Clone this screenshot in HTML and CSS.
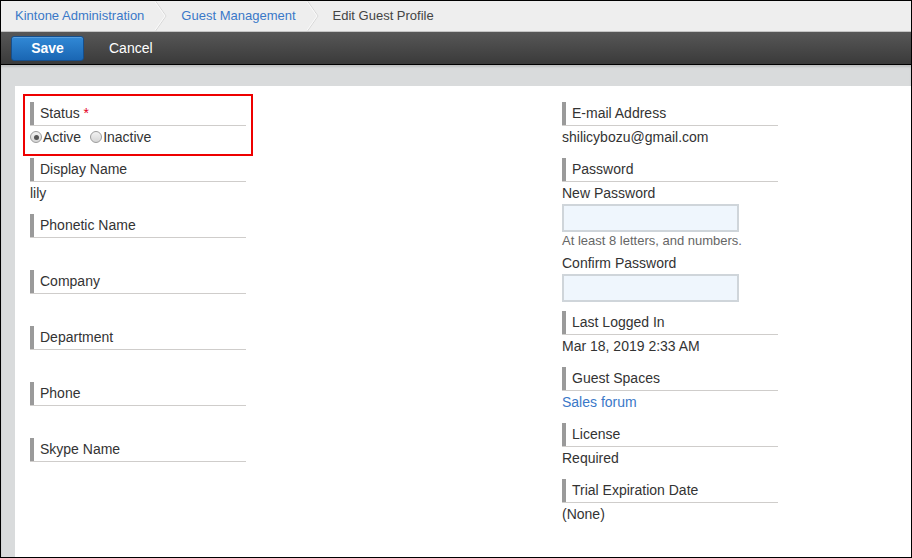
FILE: index.html
```html
<!DOCTYPE html>
<html>
<head>
<meta charset="utf-8">
<title>Edit Guest Profile</title>
<link rel="stylesheet" href="styles.css">
</head>
<body>
<div class="frame">
  <nav class="crumbs">
    <a class="crumb link">Kintone Administration</a>
    <svg class="chev" width="12" height="30" viewBox="0 0 12 30"><polyline points="0.5,0 11,15 0.5,30" fill="none" stroke="#d6d6d6" stroke-width="1"/><polyline points="-0.5,0 10,15 -0.5,30" fill="none" stroke="#fafafa" stroke-width="1"/></svg>
    <a class="crumb link">Guest Management</a>
    <svg class="chev" width="12" height="30" viewBox="0 0 12 30"><polyline points="0.5,0 11,15 0.5,30" fill="none" stroke="#d6d6d6" stroke-width="1"/><polyline points="-0.5,0 10,15 -0.5,30" fill="none" stroke="#fafafa" stroke-width="1"/></svg>
    <span class="crumb current">Edit Guest Profile</span>
  </nav>
  <div class="toolbar">
    <button class="btn-save">Save</button>
    <button class="btn-cancel">Cancel</button>
  </div>
  <div class="backdrop">
    <div class="panel">
      <div class="col col-left">
        <div class="field field-status">
          <div class="label"><span>Status <em class="req">*</em></span></div>
          <div class="value radios">
            <span class="radio"><i class="dot checked"></i>Active</span>
            <span class="radio"><i class="dot"></i>Inactive</span>
          </div>
        </div>
        <div class="field">
          <div class="label"><span>Display Name</span></div>
          <div class="value">lily</div>
        </div>
        <div class="field">
          <div class="label"><span>Phonetic Name</span></div>
          <div class="value"></div>
        </div>
        <div class="field">
          <div class="label"><span>Company</span></div>
          <div class="value"></div>
        </div>
        <div class="field">
          <div class="label"><span>Department</span></div>
          <div class="value"></div>
        </div>
        <div class="field">
          <div class="label"><span>Phone</span></div>
          <div class="value"></div>
        </div>
        <div class="field">
          <div class="label"><span>Skype Name</span></div>
          <div class="value"></div>
        </div>
      </div>
      <div class="col col-right">
        <div class="field">
          <div class="label"><span>E-mail Address</span></div>
          <div class="value">shilicybozu@gmail.com</div>
        </div>
        <div class="field field-password">
          <div class="label"><span>Password</span></div>
          <div class="value">New Password</div>
          <input class="pw" type="password">
          <div class="hint">At least 8 letters, and numbers.</div>
          <div class="value sub">Confirm Password</div>
          <input class="pw" type="password">
        </div>
        <div class="field">
          <div class="label"><span>Last Logged In</span></div>
          <div class="value">Mar 18, 2019 2:33 AM</div>
        </div>
        <div class="field">
          <div class="label"><span>Guest Spaces</span></div>
          <div class="value"><a class="link">Sales forum</a></div>
        </div>
        <div class="field">
          <div class="label"><span>License</span></div>
          <div class="value">Required</div>
        </div>
        <div class="field">
          <div class="label"><span>Trial Expiration Date</span></div>
          <div class="value">(None)</div>
        </div>
      </div>
    </div>
  </div>
</div>
</body>
</html>
```

FILE: styles.css
```css
*, *::before, *::after { box-sizing: border-box; }
html, body { margin: 0; padding: 0; background: #fff; }
body {
  font-family: "Liberation Sans", Arial, sans-serif;
  font-size: 14px;
  color: #333;
}
.frame {
  width: 912px;
  height: 558px;
  border: 1px solid #000;
  overflow: hidden;
  display: flex;
  flex-direction: column;
}
.crumbs {
  height: 31px;
  flex: none;
  background: #eeeeee;
  border-bottom: 1px solid #c4c4c4;
  display: flex;
  align-items: center;
  padding-left: 14px;
  font-size: 13px;
}
.crumb { line-height: 30px; white-space: nowrap; }
.link { color: #3a78c8; text-decoration: none; cursor: pointer; }
.current { color: #444; }
.chev { display: block; flex: none; margin: 0 14px 0 11px; }
.toolbar {
  height: 33px;
  flex: none;
  background: linear-gradient(#575757, #3a3a3a);
  border-bottom: 1px solid #000;
  display: flex;
  align-items: center;
  padding-left: 10px;
}
.btn-save {
  width: 73px;
  height: 25px;
  border: 1px solid #164f8c;
  border-radius: 3px;
  background: linear-gradient(#3189d6, #1a66b3);
  color: #fff;
  font-family: "Liberation Sans", Arial, sans-serif;
  font-weight: bold;
  font-size: 14px;
  padding: 0;
  box-shadow: inset 0 1px 0 rgba(255,255,255,0.2);
}
.btn-cancel {
  background: none;
  border: 0;
  color: #fff;
  font-family: "Liberation Sans", Arial, sans-serif;
  font-size: 14px;
  padding: 0;
  margin-left: 25px;
}
.backdrop {
  flex: 1;
  background: #d9dbdc;
  padding: 21px 0 0 14px;
  display: flex;
  box-shadow: inset 0 2px 2px rgba(0,0,0,0.12);
}
.panel {
  flex: 1;
  background: #fff;
  padding: 16px 0 0 15px;
  display: flex;
}
.col-left { width: 532px; flex: none; }
.col-right { flex: 1; }
.field { width: 216px; margin-bottom: 11px; }
.label {
  border-bottom: 1px solid #cfcdcb;
  height: 24px;
}
.label span {
  display: block;
  border-left: 4px solid #9a9a9a;
  padding-left: 6px;
  line-height: 23px;
  height: 23px;
  white-space: nowrap;
}
.req { color: #e3001b; font-style: normal; }
.value {
  margin-top: 1px;
  line-height: 20px;
  min-height: 20px;
  white-space: nowrap;
}
.field-status { position: relative; margin-bottom: 11px; }
.field-status::after {
  content: "";
  position: absolute;
  top: -8px;
  left: -7px;
  width: 230px;
  height: 62px;
  border: 2px solid #ee0000;
  pointer-events: none;
}
.radios { display: flex; align-items: center; margin-top: 1px; }
.radio { display: inline-flex; align-items: center; margin-right: 9px; }
.dot {
  width: 12px;
  height: 12px;
  border-radius: 50%;
  border: 1px solid #9c9c9c;
  background: linear-gradient(#f2f2f2, #d6d6d6);
  margin-right: 1px;
  position: relative;
  display: inline-block;
}
.dot.checked::after {
  content: "";
  position: absolute;
  left: 2.5px;
  top: 2.5px;
  width: 5px;
  height: 5px;
  border-radius: 50%;
  background: #555;
}
.pw {
  display: block;
  width: 177px;
  height: 28px;
  margin: 1px 0 0 0;
  border: 2px solid #cfd5da;
  background: #eff6fd;
  padding: 0;
}
.hint {
  font-size: 13px;
  color: #666;
  line-height: 18px;
  white-space: nowrap;
}
.value.sub { margin-top: 3px; }
.field-password { margin-bottom: 9px; }
```
